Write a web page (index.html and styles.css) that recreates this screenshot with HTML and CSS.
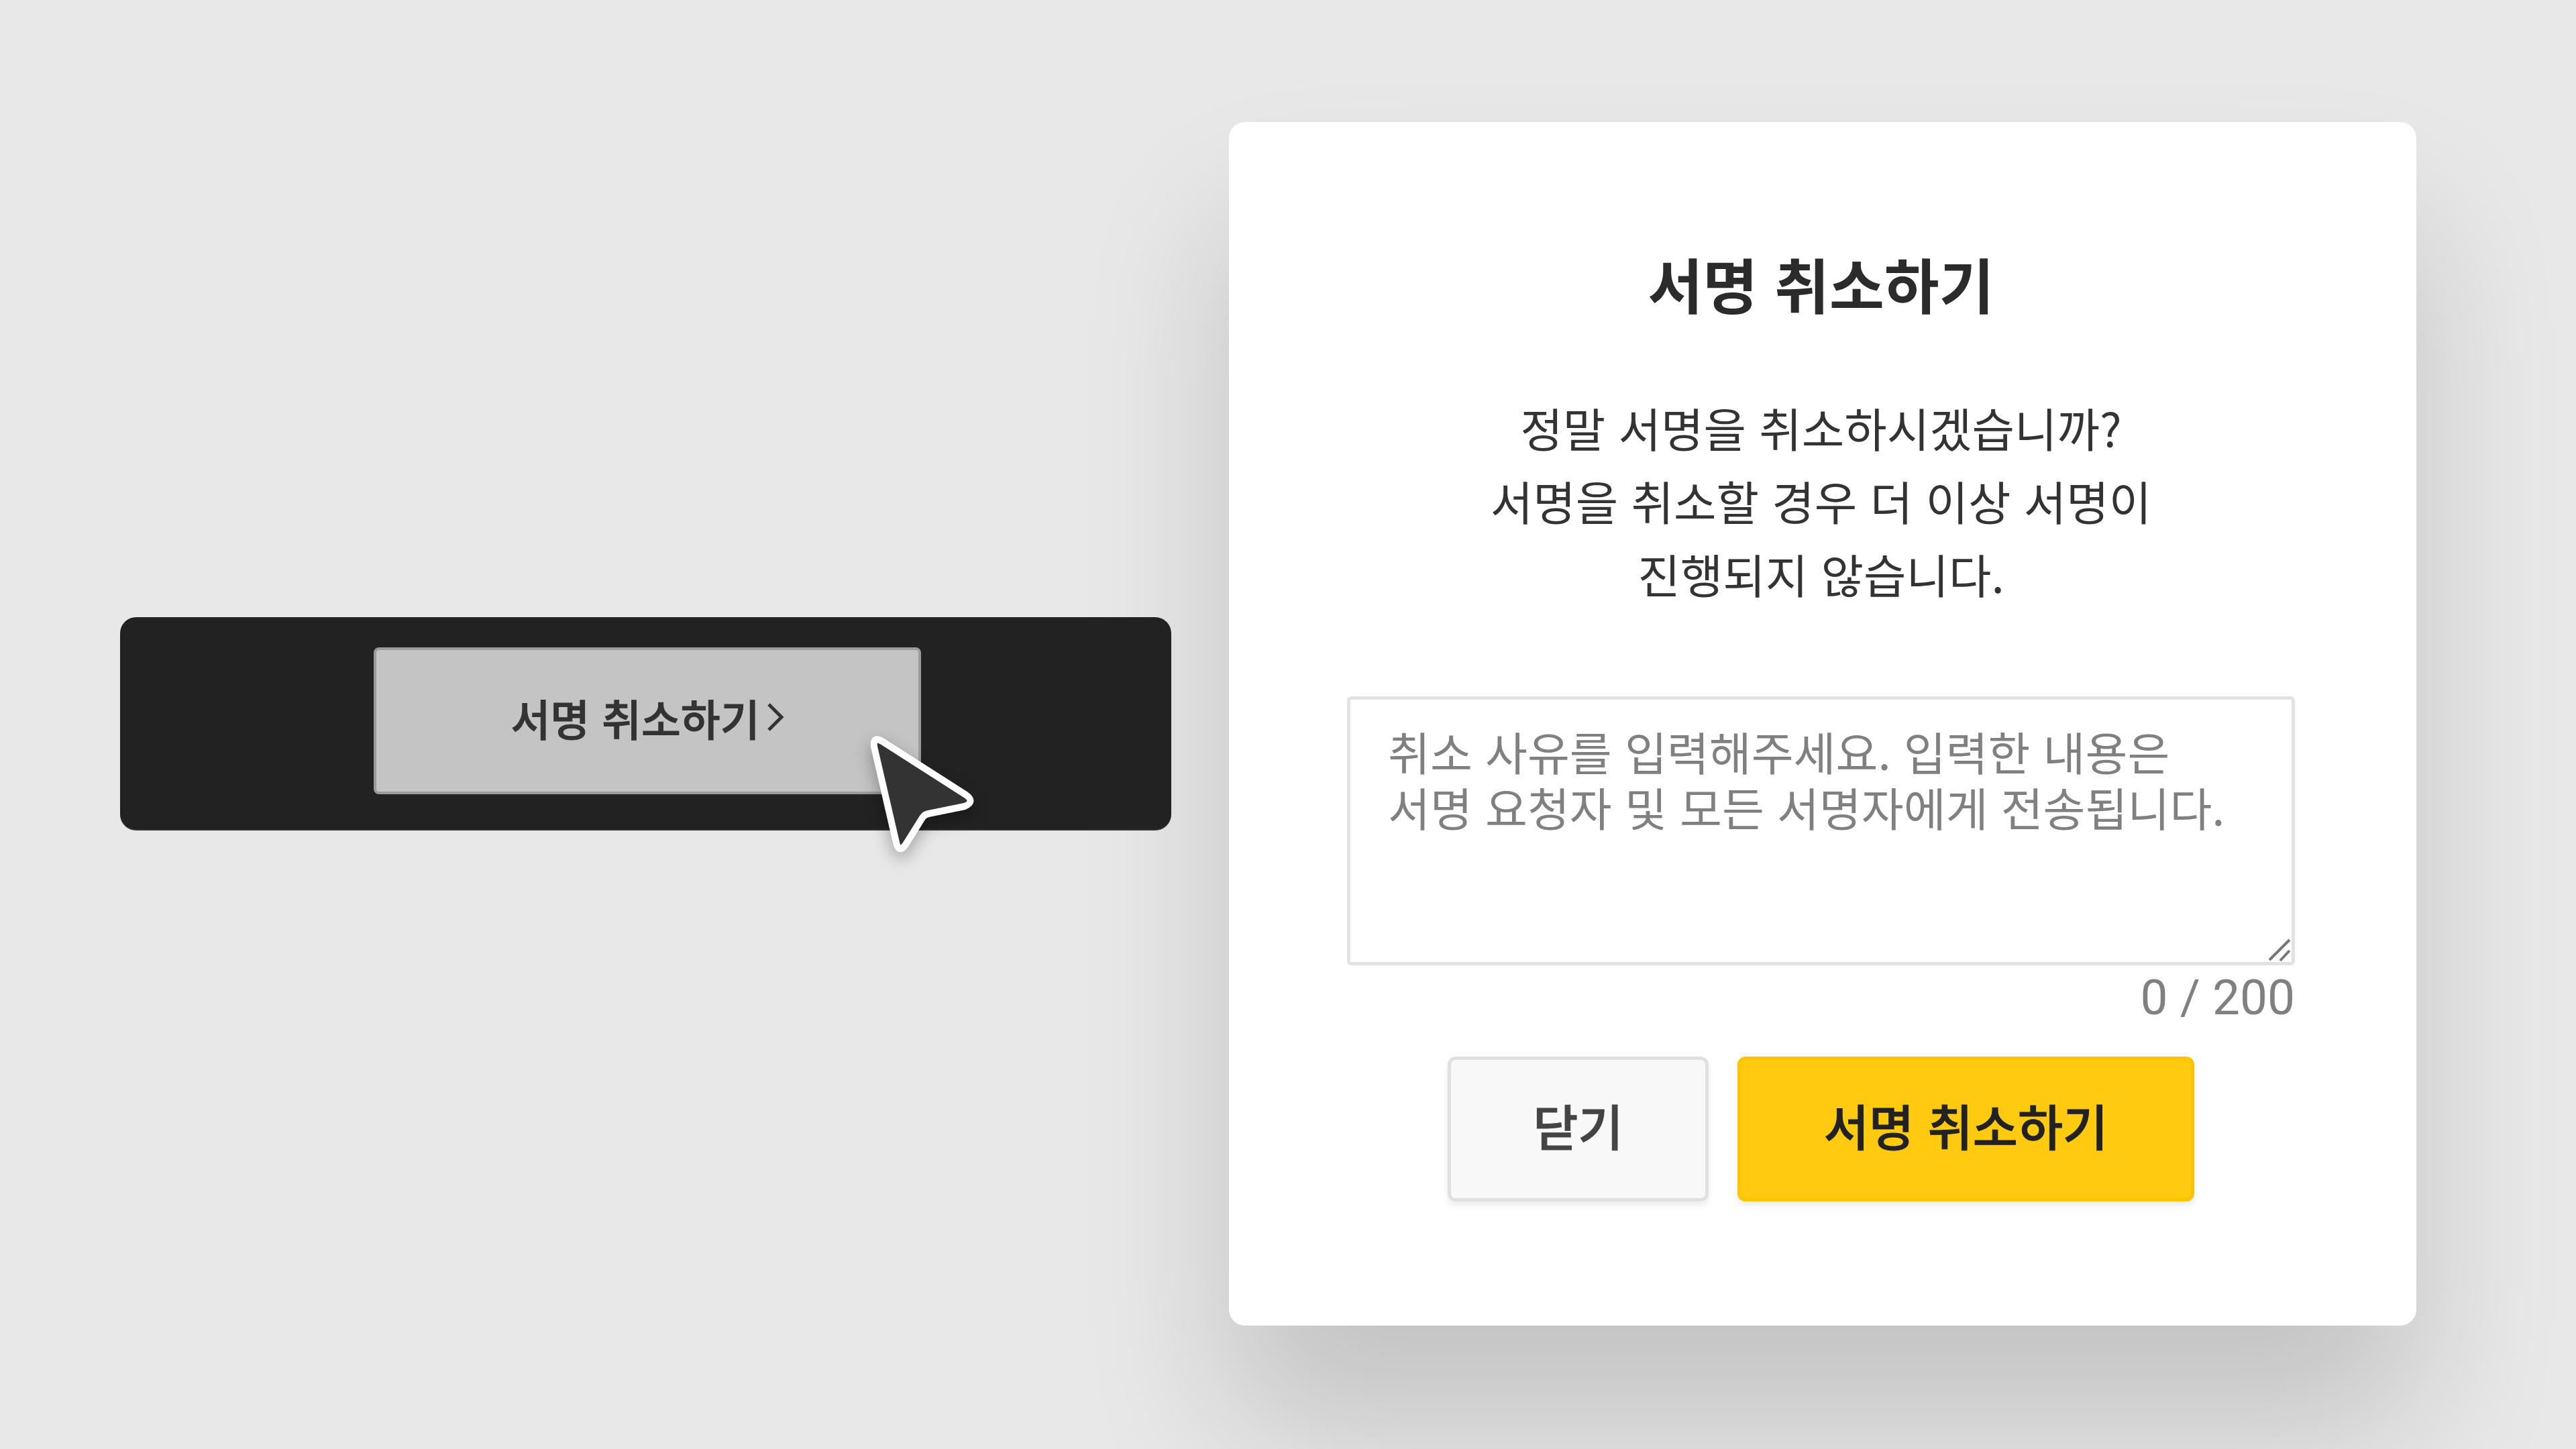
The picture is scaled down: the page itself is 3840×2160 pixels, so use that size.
FILE: index.html
```html
<!DOCTYPE html>
<html lang="ko">
    <head>
        <meta charset="utf-8"/>
        <link rel="stylesheet" href="styles.css">
    </head>
    <body>
        <div class="sign-bar">
            <button class="cancel-link">
                서명 취소하기
                <svg class="chevron" viewBox="0 0 26 42"><path d="M3 2 L22 21 L3 40"/></svg>
            </button>
            <svg class="pointer" viewBox="0 0 240 220">
                <path d="M43 52 Q41 36 55 44 L180 124 Q194 134 178 141 L124 152 Q118 153 115 158 L90 198 Q80 212 76 195 Z"/>
            </svg>
        </div>

        <div class="modal">
            <h1 class="modal-title">서명 취소하기</h1>
            <p class="modal-text">정말 서명을 취소하시겠습니까?<br/>서명을 취소할 경우 더 이상 서명이<br/>진행되지 않습니다.</p>
            <div class="reason-box">
                취소 사유를 입력해주세요. 입력한 내용은<br/>서명 요청자 및 모든 서명자에게 전송됩니다.
                <svg class="grip" viewBox="0 0 40 40"><path d="M7 37 L37 7 M23 38 L37 23"/></svg>
            </div>
            <div class="reason-count">0 / 200</div>
            <div class="modal-actions">
                <button class="btn btn-close">닫기</button>
                <button class="btn btn-confirm">서명 취소하기</button>
            </div>
        </div>
    </body>
</html>
```

FILE: styles.css
```css
body {
    margin: 0;
    width: 3840px;
    height: 2160px;
    overflow: hidden;
    background: #e8e8e8;
    display: flex;
    align-items: center;
    gap: 86px;
    padding: 0 0 2px 179px;
    box-sizing: border-box;
    font-family: "Noto Sans CJK KR", "Noto Sans", sans-serif;
}

button {
    font-family: inherit;
    cursor: pointer;
}

/* left side */
.sign-bar {
    position: relative;
    width: 1567px;
    height: 318px;
    box-sizing: border-box;
    background: #222222;
    border-bottom: 2px solid #333333;
    border-radius: 24px;
    display: flex;
    justify-content: center;
    padding-top: 45px;
}

.cancel-link {
    width: 816px;
    height: 219px;
    box-sizing: border-box;
    margin-left: 5px;
    background: #c4c4c4;
    border: 4px solid #9b9b9b;
    border-radius: 8px;
    color: #333333;
    font-size: 64px;
    font-weight: 500;
    -webkit-text-stroke: 1px #333333;
    display: flex;
    align-items: center;
    justify-content: center;
    gap: 10px;
    padding: 0 0 12px;
}

.chevron {
    width: 26px;
    height: 42px;
    fill: none;
    stroke: #333333;
    stroke-width: 5;
}

.pointer {
    position: absolute;
    left: 1081px;
    top: 141px;
    width: 240px;
    height: 220px;
    fill: #333333;
    stroke: #ffffff;
    stroke-width: 10;
    stroke-linejoin: round;
    filter: drop-shadow(0 10px 12px rgba(0, 0, 0, 0.3));
}

/* modal */
.modal {
    width: 1770px;
    height: 1794px;
    box-sizing: border-box;
    background: #ffffff;
    border-radius: 24px;
    box-shadow: 0 150px 220px rgba(0, 0, 0, 0.16);
    padding: 176px 181px 0 176px;
    display: flex;
    flex-direction: column;
    align-items: center;
}

.modal-title {
    margin: 0;
    font-size: 89px;
    font-weight: 700;
    line-height: 128px;
    color: #2b2b2b;
}

.modal-text {
    margin: 97px 0 0;
    font-size: 69px;
    font-weight: 400;
    line-height: 109px;
    color: #333333;
    text-align: center;
}

.reason-box {
    position: relative;
    width: 100%;
    height: 401px;
    box-sizing: border-box;
    margin-top: 128px;
    padding: 35px 56px 0;
    background: #ffffff;
    border: 5px solid #e2e2e2;
    border-radius: 6px;
    font-size: 68.4px;
    line-height: 83px;
    color: #808080;
}

.grip {
    position: absolute;
    right: 0;
    bottom: 0;
    width: 40px;
    height: 40px;
    fill: none;
    stroke: #777777;
    stroke-width: 4;
}

.reason-count {
    width: 100%;
    text-align: right;
    font-family: Roboto, sans-serif;
    font-size: 73px;
    line-height: 96px;
    color: #808080;
}

.modal-actions {
    display: flex;
    gap: 43px;
    margin-top: 40px;
}

.btn {
    height: 216px;
    box-sizing: border-box;
    border-radius: 12px;
    font-size: 73px;
    font-weight: 500;
    padding: 0 0 14px;
    box-shadow: 0 6px 10px rgba(0, 0, 0, 0.08);
}

.btn-close {
    width: 389px;
    background: #f8f8f8;
    border: 5px solid #e0e0e0;
    color: #444444;
    -webkit-text-stroke: 1px #444444;
}

.btn-confirm {
    width: 681px;
    background: #ffca10;
    border: 5px solid #ffc400;
    color: #222222;
    -webkit-text-stroke: 1px #222222;
}
```
